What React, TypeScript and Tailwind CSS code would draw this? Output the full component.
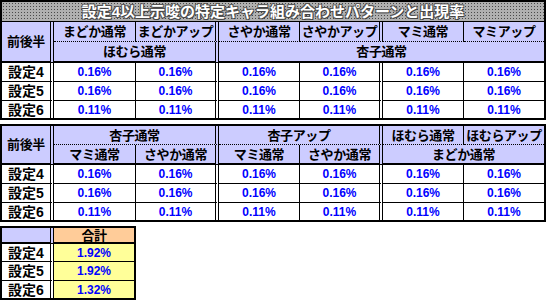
const font = "font-['Liberation_Sans','Noto_Sans_CJK_JP',sans-serif]";

const settings = ["設定4", "設定5", "設定6"];

const table1Rows: string[][] = [
  ["0.16%", "0.16%", "0.16%", "0.16%", "0.16%", "0.16%"],
  ["0.16%", "0.16%", "0.16%", "0.16%", "0.16%", "0.16%"],
  ["0.11%", "0.11%", "0.11%", "0.11%", "0.11%", "0.11%"],
];

const totals = ["1.92%", "1.92%", "1.32%"];
const rowH = ["h-[19px]", "h-[19px]", "h-[17px]"];

const head = "p-0 bg-[#ccccff] text-center text-[13px] font-bold text-black whitespace-nowrap tracking-[-0.4px] border-black";

const Cols = () => (
  <colgroup>
    <col className="w-[52px]" />
    <col className="w-[82px]" />
    <col className="w-[83px]" />
    <col className="w-[81px]" />
    <col className="w-[83px]" />
    <col className="w-[81px]" />
    <col />
  </colgroup>
);

const DataRows = ({ rows }: { rows: string[][] }) => (
  <>
    {rows.map((r, i) => (
      <tr key={i}>
        <td
          className={`${rowH[i]} p-0 border-r-4 border-double border-black bg-white text-center text-[14px] font-bold text-black ${
            i < 2 ? "border-b [border-bottom-style:solid]" : ""
          }`}
        >
          {settings[i]}
        </td>
        {r.map((v, j) => (
          <td
            key={j}
            className={`${rowH[i]} p-0 bg-white text-center text-[12px] font-bold text-[#0000ff] border-black ${
              i < 2 ? "border-b" : ""
            } ${j === 5 ? "" : j % 2 === 1 ? "border-r-4 border-double [border-bottom-style:solid]" : "border-r"}`}
          >
            {v}
          </td>
        ))}
      </tr>
    ))}
  </>
);

const HeadTop = ({ label, last, sep, h }: { label: string; last?: boolean; sep?: boolean; h: string }) => (
  <td
    className={`${h} ${head} border-b [border-bottom-style:dotted] ${
      last ? "" : sep ? "border-r-4 [border-right-style:double]" : "border-r"
    }`}
  >
    {label}
  </td>
);

export default function App() {
  return (
    <div className={`w-[548px] h-[301px] overflow-hidden bg-white flex flex-col gap-[4px] leading-none ${font}`}>
      <table className="w-[546px] table-fixed border-separate border-spacing-0 border-2 border-black">
        <Cols />
        <tbody>
          <tr>
            <td
              colSpan={7}
              className="h-[20px] p-0 border-b border-black text-center text-[15px] font-bold text-white bg-[#b0b0b0] bg-[radial-gradient(#4a4a4a_0.6px,transparent_0.9px)] bg-[length:3px_3px] [text-shadow:1px_1px_0_#444,-1px_-1px_0_#555,1px_-1px_0_#555,-1px_1px_0_#555]"
            >
              設定4以上示唆の特定キャラ組み合わせパターンと出現率
            </td>
          </tr>
          <tr>
            <td rowSpan={2} className={`${head} border-r-4 border-double border-b-2 [border-bottom-style:solid]`}>
              前後半
            </td>
            <HeadTop h="h-[20px]" label="まどか通常" />
            <HeadTop h="h-[20px]" label="まどかアップ" sep />
            <HeadTop h="h-[20px]" label="さやか通常" />
            <HeadTop h="h-[20px]" label="さやかアップ" sep />
            <HeadTop h="h-[20px]" label="マミ通常" />
            <HeadTop h="h-[20px]" label="マミアップ" last />
          </tr>
          <tr>
            <td colSpan={2} className={`h-[21px] ${head} border-b-2 border-r-4 border-double [border-bottom-style:solid]`}>
              ほむら通常
            </td>
            <td colSpan={4} className={`h-[21px] ${head} border-b-2`}>
              杏子通常
            </td>
          </tr>
          <DataRows rows={table1Rows} />
        </tbody>
      </table>

      <table className="w-[546px] table-fixed border-separate border-spacing-0 border-2 border-black">
        <Cols />
        <tbody>
          <tr>
            <td rowSpan={2} className={`${head} border-r-4 border-double border-b-2 [border-bottom-style:solid]`}>
              前後半
            </td>
            <td colSpan={2} className={`h-[19px] ${head} border-b [border-bottom-style:dotted] border-r-4 [border-right-style:double]`}>
              杏子通常
            </td>
            <td colSpan={2} className={`h-[19px] ${head} border-b [border-bottom-style:dotted] border-r-4 [border-right-style:double]`}>
              杏子アップ
            </td>
            <HeadTop h="h-[19px]" label="ほむら通常" />
            <HeadTop h="h-[19px]" label="ほむらアップ" last />
          </tr>
          <tr>
            <td className={`h-[20px] ${head} border-b-2 border-r`}>マミ通常</td>
            <td className={`h-[20px] ${head} border-b-2 border-r-4 border-double [border-bottom-style:solid]`}>
              さやか通常
            </td>
            <td className={`h-[20px] ${head} border-b-2 border-r`}>マミ通常</td>
            <td className={`h-[20px] ${head} border-b-2 border-r-4 border-double [border-bottom-style:solid]`}>
              さやか通常
            </td>
            <td colSpan={2} className={`h-[20px] ${head} border-b-2`}>
              まどか通常
            </td>
          </tr>
          <DataRows rows={table1Rows} />
        </tbody>
      </table>

      <table className="w-[136px] table-fixed border-separate border-spacing-0 border-2 border-black">
        <colgroup>
          <col className="w-[52px]" />
          <col />
        </colgroup>
        <tbody>
          <tr>
            <td className="h-[16px] p-0 bg-[#ccccff] border-black border-b-2 border-r-4 border-double [border-bottom-style:solid]" />
            <td className={`h-[16px] ${head} !bg-[#ffcc99] border-b-2`}>合計</td>
          </tr>
          {totals.map((t, i) => (
            <tr key={i}>
              <td
                className={`${i === 0 ? "h-[18px]" : rowH[i]} p-0 bg-white text-center text-[14px] font-bold border-black border-r-4 border-double ${
                  i < 2 ? "border-b [border-bottom-style:solid]" : ""
                }`}
              >
                {settings[i]}
              </td>
              <td
                className={`${i === 0 ? "h-[18px]" : rowH[i]} p-0 bg-[#ffff99] text-center text-[12px] font-bold text-[#0000ff] border-black ${
                  i < 2 ? "border-b" : ""
                }`}
              >
                {t}
              </td>
            </tr>
          ))}
        </tbody>
      </table>
    </div>
  );
}
